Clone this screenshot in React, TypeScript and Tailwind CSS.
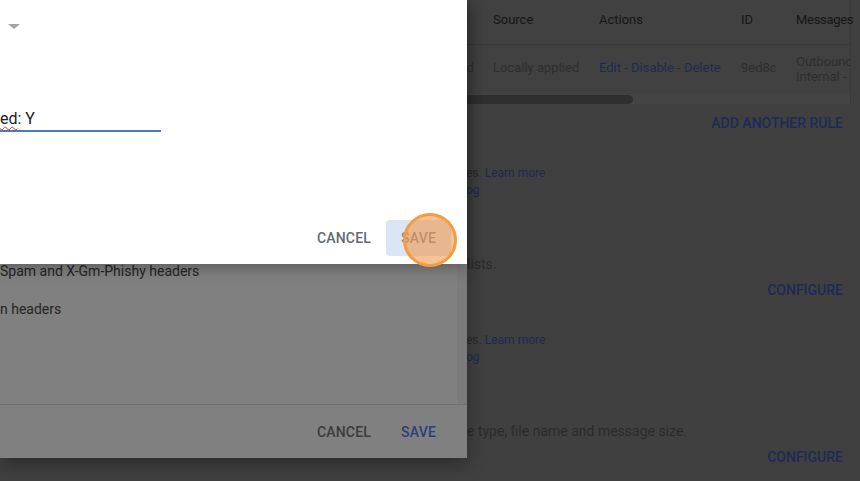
import React from "react";

const headCols = [
  { label: "", w: "w-[31px] shrink-0" },
  { label: "Source", w: "w-[106px] shrink-0" },
  { label: "Actions", w: "w-[142px] shrink-0" },
  { label: "ID", w: "w-[55px] shrink-0" },
  { label: "Messages", w: "flex-1 min-w-0 tracking-[-0.3px]" },
];

function RulesTable() {
  return (
    <div className="h-[105px] bg-[#414141] border-r border-[#3a3a3a] flex flex-col">
      <div className="h-[45px] flex border-b border-[#383838] text-[13px] leading-[16px] text-[#161616] pt-[12px]">
        {headCols.map((c, i) => (
          <div key={i} className={`${c.w} whitespace-nowrap`}>
            {c.label}
          </div>
        ))}
      </div>
      <div className="h-[49px] flex text-[13px] text-[#2e2e2e] whitespace-nowrap">
        <div className="w-[31px] shrink-0 pt-[15px] leading-[16px] text-right pr-[19px] overflow-hidden">
          d
        </div>
        <div className="w-[106px] shrink-0 pt-[15px] leading-[16px]">Locally applied</div>
        <div className="w-[142px] shrink-0 pt-[15px] leading-[16px] text-[#1f2a52]">
          Edit - Disable - Delete
        </div>
        <div className="w-[55px] shrink-0 pt-[15px] leading-[16px]">9ed8c</div>
        <div className="flex-1 min-w-0 pt-[9px] leading-[15px] overflow-hidden">
          <div>Outbound</div>
          <div>Internal - Receiving</div>
        </div>
      </div>
      <div className="h-[10px] bg-[#444444] flex items-center">
        <div className="w-[171px] h-[9px] rounded-full bg-[#2f2f2f]" />
      </div>
    </div>
  );
}

function LinkNote() {
  return (
    <div className="ml-[4px] text-[12px] leading-[17px] whitespace-nowrap">
      <div className="text-[#2a2a2a]">
        es. <span className="text-[#1f2850]">Learn more</span>
      </div>
      <div className="text-[#1f2850]">og</div>
    </div>
  );
}

function PageBehind() {
  return (
    <div className="flex flex-col pl-[462px] pr-[9px]">
      <RulesTable />
      <div className="mt-[10px] pr-[8px] text-right text-[14px] leading-[16px] font-medium text-[#1e2a55]">
        ADD ANOTHER RULE
      </div>
      <div className="mt-[34px]">
        <LinkNote />
      </div>
      <div className="mt-[55px] ml-[5px] text-[14px] leading-[20px] text-[#2b2b2b]">lists.</div>
      <div className="mt-[8px] pr-[8px] text-right text-[14px] leading-[16px] font-medium text-[#1e2a55]">
        CONFIGURE
      </div>
      <div className="mt-[34px]">
        <LinkNote />
      </div>
      <div className="mt-[55px] ml-[5px] text-[14px] leading-[20px] text-[#2b2b2b] whitespace-nowrap">
        e type, file name and message size.
      </div>
      <div className="mt-[8px] pr-[8px] text-right text-[14px] leading-[16px] font-medium text-[#1e2a55]">
        CONFIGURE
      </div>
    </div>
  );
}

function LowerDialog() {
  return (
    <div className="absolute left-0 top-0 w-[467px] h-[458px] bg-[#808080] flex flex-col shadow-[0_6px_18px_rgba(0,0,0,0.35)]">
      <div className="h-[405px] flex border-b border-[#717171]">
        <div className="flex-1 pt-[261px] text-[14px] leading-[20px] text-[#242424] whitespace-nowrap">
          <div>Spam and X-Gm-Phishy headers</div>
          <div className="mt-[18px]">n headers</div>
        </div>
        <div className="w-[10px] bg-[#7b7b7b]" />
      </div>
      <div className="flex-1 flex items-center justify-end gap-[30px] pr-[31px] pt-[2px] text-[14px] font-medium tracking-[0.2px]">
        <span className="text-[#3b3b3b]">CANCEL</span>
        <span className="text-[#2a3d7c]">SAVE</span>
      </div>
    </div>
  );
}

function UpperDialog() {
  return (
    <div className="absolute left-0 top-0 w-[467px] h-[264px] bg-white flex flex-col shadow-[0_4px_14px_rgba(0,0,0,0.28)]">
      <div className="pt-[24px] pl-[8px]">
        <div className="w-0 h-0 border-l-[6px] border-r-[6px] border-t-[5px] border-l-transparent border-r-transparent border-t-[#a3a3a3]" />
      </div>
      <div className="mt-[80px] w-[161px] border-b-2 border-[#4a79c0] text-[16px] leading-[20px] pb-[1px] text-[#202020]">
        <span className="underline decoration-wavy decoration-[#d33] decoration-1 underline-offset-2">ed</span>
        : Y
      </div>
      <div className="mt-auto mb-[8px] flex items-center justify-end gap-[15px] pr-[16px] text-[14px] font-medium tracking-[0.2px]">
        <span className="text-[#666a6f]">CANCEL</span>
        <div className="h-[36px] px-[15px] rounded bg-[#dbe5f6] flex items-center text-[#858b95]">SAVE</div>
      </div>
    </div>
  );
}

export default function App() {
  return (
    <div className="relative w-[860px] h-[481px] overflow-hidden bg-[#404040] font-['Roboto','Liberation_Sans',sans-serif]">
      <PageBehind />
      <LowerDialog />
      <UpperDialog />
      {/* click marker */}
      <div className="absolute left-[403px] top-[213px] w-[54px] h-[54px] rounded-full border-[3px] border-[#f59b40] bg-[#f3913c]/55" />
    </div>
  );
}
